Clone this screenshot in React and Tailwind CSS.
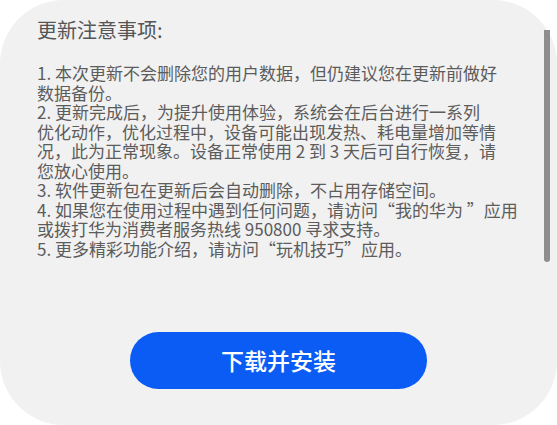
const lines = [
  "1. 本次更新不会删除您的用户数据，但仍建议您在更新前做好",
  "数据备份。",
  "2. 更新完成后，为提升使用体验，系统会在后台进行一系列",
  "优化动作，优化过程中，设备可能出现发热、耗电量增加等情",
  "况，此为正常现象。设备正常使用 2 到 3 天后可自行恢复，请",
  "您放心使用。",
  "3. 软件更新包在更新后会自动删除，不占用存储空间。",
  "4. 如果您在使用过程中遇到任何问题，请访问“我的华为 ”应用",
  "或拨打华为消费者服务热线 950800 寻求支持。",
  "5. 更多精彩功能介绍，请访问“玩机技巧”应用。",
];

export default function App() {
  return (
    <div className="h-[425px] w-[557px] bg-white font-['Noto_Sans_CJK_SC','Noto_Sans',sans-serif]">
      <div className="relative flex h-full flex-col rounded-[64px] bg-[#f1f1f1] pl-[37px] pt-[16px]">
        {/* Update notes */}
        <h1 className="text-[20px] leading-[28px] text-[#555555]">更新注意事项:</h1>
        <div className="mt-[19px] text-[17px] leading-[19.5px] text-[#5c5c5c]">
          {lines.map((line, i) => (
            <div key={i} className="whitespace-nowrap">
              {line}
            </div>
          ))}
        </div>

        {/* Scroll thumb */}
        <div className="absolute right-[7px] top-[30px] h-[232px] w-[6px] rounded-b-full bg-[#8e8e8e]" />

        <div className="mt-[74px] flex justify-center pr-[37px]">
          <button className="h-[57px] w-[297px] rounded-full bg-[#0b5cf5] text-[23px] font-medium text-white">
            下载并安装
          </button>
        </div>
      </div>
    </div>
  );
}
